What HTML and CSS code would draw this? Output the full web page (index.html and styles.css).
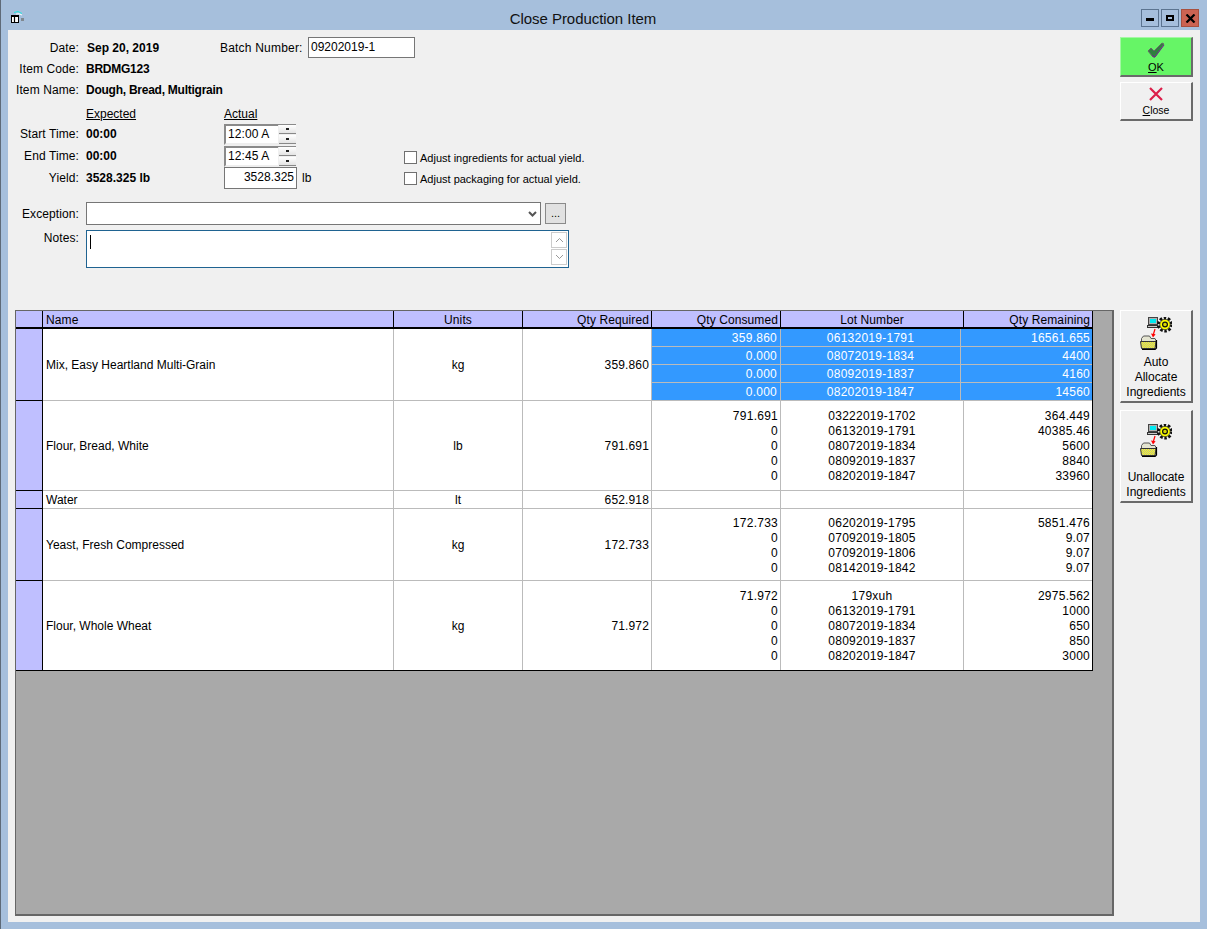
FILE: index.html
```html
<!DOCTYPE html>
<html lang="en">
<head>
<meta charset="utf-8">
<title>Close Production Item</title>
<link rel="stylesheet" href="styles.css">
</head>
<body>
<svg class="defs" width="0" height="0" aria-hidden="true">
  <defs>
    <pattern id="dither" width="2" height="2" patternUnits="userSpaceOnUse">
      <rect width="2" height="2" fill="#ffff20"/>
      <rect width="1" height="1" fill="#b8b890"/>
      <rect x="1" y="1" width="1" height="1" fill="#b8b890"/>
    </pattern>
    <symbol id="alloc" viewBox="0 0 32 33">
      <rect x="8.500" y="0.500" width="9" height="7" fill="#b0b0b0" stroke="#444"/>
      <rect x="10" y="2" width="6" height="4" fill="#00e8f0"/>
      <rect x="7.500" y="8.500" width="10" height="2" fill="#c8c8c8" stroke="#333"/>
      <circle cx="25" cy="7.500" r="6.300" fill="none" stroke="#111" stroke-width="3.400" stroke-dasharray="2.400 1.557"/>
      <circle cx="25" cy="7.500" r="5.200" fill="#ffff00" stroke="#222" stroke-width="0.700"/>
      <circle cx="25" cy="7.500" r="2.400" fill="#d8d800" stroke="#111" stroke-width="1.200"/>
      <path d="M15 12l-1.500 5" stroke="#f00" stroke-width="1.200" fill="none"/>
      <path d="M11 16.500l2 4 2.600-3.200z" fill="#f00"/>
      <path d="M1.500 21.500l2-2.500h6l1.500 2.500h4l1 2v6h-14.500z" fill="#e4e4d0" stroke="#555"/>
      <path d="M0.500 24.500h15.500l-1 7h-13.500z" fill="url(#dither)" stroke="#333"/>
      <path d="M16.500 23v8l-1.500 1.500h-13" fill="none" stroke="#000" stroke-width="1.200"/>
    </symbol>
  </defs>
</svg>
<div class="window">
  <header class="titlebar">
    <svg class="app-icon" width="16" height="14" viewBox="0 0 16 14" aria-hidden="true">
      <path d="M4 2.500q4-2.500 8 1" fill="none" stroke="#20e8e0"/>
      <path d="M6 4q3-1 6 1" fill="none" stroke="#fff"/>
      <rect x="1.500" y="5.500" width="7" height="7" fill="#fff" stroke="#000"/>
      <path d="M1 6.500h8M4.500 7v5" stroke="#000" stroke-width="1.200"/>
      <rect x="11" y="8" width="3" height="3" fill="#808890"/>
    </svg>
    <h1 class="title">Close Production Item</h1>
    <div class="win-buttons">
      <span class="win-btn"><i class="glyph-min"></i></span>
      <span class="win-btn"><i class="glyph-max"></i></span>
      <span class="win-btn win-close">
        <svg width="11" height="9" viewBox="0 0 11 9" aria-hidden="true"><path d="M1.500 0.500l8 8M9.500 0.500l-8 8" stroke="#000" stroke-width="2.200"/></svg>
      </span>
    </div>
  </header>

  <div class="client">
    <section class="top">
      <form class="form">
        <div class="row row-date">
          <span class="label">Date:</span>
          <strong class="value value-date">Sep 20, 2019</strong>
          <span class="batch-label">Batch Number:</span>
          <span class="input batch-input">09202019-1</span>
        </div>
        <div class="row"><span class="label">Item Code:</span><strong class="value tight">BRDMG123</strong></div>
        <div class="row"><span class="label">Item Name:</span><strong class="value tight">Dough, Bread, Multigrain</strong></div>

        <div class="times">
          <div class="times-main">
            <div class="row row-head">
              <span class="label"></span>
              <span class="col-expected head">Expected</span>
              <span class="head">Actual</span>
            </div>
            <div class="row row-time">
              <span class="label">Start Time:</span><strong class="value">00:00</strong>
              <span class="time-field"><span class="time-text">12:00 A</span><span class="spin"><i class="up"></i><i class="down"></i></span></span>
            </div>
            <div class="row row-time">
              <span class="label">End Time:</span><strong class="value">00:00</strong>
              <span class="time-field"><span class="time-text">12:45 A</span><span class="spin"><i class="up"></i><i class="down"></i></span></span>
            </div>
            <div class="row row-time">
              <span class="label">Yield:</span><strong class="value">3528.325 lb</strong>
              <span class="input yield-input">3528.325</span><span class="unit">lb</span>
            </div>
          </div>
          <div class="checks">
            <label class="check"><i class="box"></i>Adjust ingredients for actual yield.</label>
            <label class="check"><i class="box"></i>Adjust packaging for actual yield.</label>
          </div>
        </div>

        <div class="row row-exception">
          <span class="label">Exception:</span>
          <span class="select"><svg width="9" height="6" viewBox="0 0 9 6" aria-hidden="true"><path d="M1 1l3.500 3.500L8 1" fill="none" stroke="#555" stroke-width="2"/></svg></span>
          <span class="dots">...</span>
        </div>
        <div class="row row-notes">
          <span class="label">Notes:</span>
          <span class="notes">
            <i class="caret"></i>
            <span class="scroll">
              <i class="scroll-btn"><svg width="9" height="6" viewBox="0 0 9 6" aria-hidden="true"><path d="M1 5l3.500-3.500L8 5" fill="none" stroke="#999"/></svg></i>
              <i class="scroll-btn"><svg width="9" height="6" viewBox="0 0 9 6" aria-hidden="true"><path d="M1 1l3.500 3.500L8 1" fill="none" stroke="#999"/></svg></i>
            </span>
          </span>
        </div>
      </form>
      <div class="actions">
        <button class="btn btn-ok" type="button">
          <svg width="18" height="16" viewBox="0 0 18 16" aria-hidden="true">
            <path d="M1 9l3-3 3 3 8-8 2 1-9 13H6z" fill="#2f7f3f" stroke="#666" stroke-width="1"/>
            <path d="M5 13l2 2h1l9-12" fill="none" stroke="#6a2a8a" stroke-width="1"/>
          </svg>
          <span><u>O</u>K</span>
        </button>
        <button class="btn btn-close" type="button">
          <svg width="14" height="14" viewBox="0 0 14 14" aria-hidden="true">
            <path d="M1 1l12 12M13 1l-12 12" stroke="#dc1f4a" stroke-width="2.200"/>
          </svg>
          <span><u>C</u>lose</span>
        </button>
      </div>
    </section>

    <section class="bottom">
      <div class="grid-area">
        <div class="grid">
          <div class="g-row g-head">
            <div class="h-stub"></div>
            <div class="h-cell left">Name</div>
            <div class="h-cell center">Units</div>
            <div class="h-cell right">Qty Required</div>
            <div class="h-cell right">Qty Consumed</div>
            <div class="h-cell center">Lot Number</div>
            <div class="h-cell right end">Qty Remaining</div>
          </div>

          <div class="g-row r1">
            <div class="stub"></div>
            <div class="cell left">Mix, Easy Heartland Multi-Grain</div>
            <div class="cell center">kg</div>
            <div class="cell right num">359.860</div>
            <div class="selected">
              <div class="s-row"><span>359.860</span><span>06132019-1791</span><span>16561.655</span></div>
              <div class="s-row"><span>0.000</span><span>08072019-1834</span><span>4400</span></div>
              <div class="s-row"><span>0.000</span><span>08092019-1837</span><span>4160</span></div>
              <div class="s-row"><span>0.000</span><span>08202019-1847</span><span>14560</span></div>
            </div>
          </div>

          <div class="g-row r2">
            <div class="stub"></div>
            <div class="cell left">Flour, Bread, White</div>
            <div class="cell center">lb</div>
            <div class="cell right num">791.691</div>
            <div class="cell right stack">791.691<br>0<br>0<br>0<br>0</div>
            <div class="cell center stack">03222019-1702<br>06132019-1791<br>08072019-1834<br>08092019-1837<br>08202019-1847</div>
            <div class="cell right stack end">364.449<br>40385.46<br>5600<br>8840<br>33960</div>
          </div>

          <div class="g-row r3">
            <div class="stub"></div>
            <div class="cell left">Water</div>
            <div class="cell center">lt</div>
            <div class="cell right num">652.918</div>
            <div class="cell"></div>
            <div class="cell"></div>
            <div class="cell end"></div>
          </div>

          <div class="g-row r4">
            <div class="stub"></div>
            <div class="cell left">Yeast, Fresh Compressed</div>
            <div class="cell center">kg</div>
            <div class="cell right num">172.733</div>
            <div class="cell right stack">172.733<br>0<br>0<br>0</div>
            <div class="cell center stack">06202019-1795<br>07092019-1805<br>07092019-1806<br>08142019-1842</div>
            <div class="cell right stack end">5851.476<br>9.07<br>9.07<br>9.07</div>
          </div>

          <div class="g-row r5">
            <div class="stub"></div>
            <div class="cell left">Flour, Whole Wheat</div>
            <div class="cell center">kg</div>
            <div class="cell right num">71.972</div>
            <div class="cell right stack">71.972<br>0<br>0<br>0<br>0</div>
            <div class="cell center stack">179xuh<br>06132019-1791<br>08072019-1834<br>08092019-1837<br>08202019-1847</div>
            <div class="cell right stack end">2975.562<br>1000<br>650<br>850<br>3000</div>
          </div>
        </div>
      </div>
      <div class="side">
        <button class="btn btn-tall" type="button">
          <svg class="alloc" width="32" height="33" aria-hidden="true"><use href="#alloc"/></svg>
          <span class="btn-label">Auto<br>Allocate<br>Ingredients</span>
        </button>
        <button class="btn btn-tall btn-un" type="button">
          <svg class="alloc" width="32" height="33" aria-hidden="true"><use href="#alloc"/></svg>
          <span class="btn-label">Unallocate<br>Ingredients</span>
        </button>
      </div>
    </section>
  </div>
</div>
</body>
</html>
```
FILE: styles.css
```css
* { box-sizing: border-box; }
html, body { margin: 0; padding: 0; }
body {
  width: 1207px;
  height: 929px;
  overflow: hidden;
  font-family: "Liberation Sans", Arial, sans-serif;
  font-size: 12px;
  color: #000;
}
.defs { display: block; height: 0; }
i { display: block; font-style: normal; }

.window {
  width: 1207px;
  height: 929px;
  display: flex;
  flex-direction: column;
  background: #a6bfdc;
  border-left: 1px solid #5e6a78;
}
.titlebar {
  height: 30px;
  flex: none;
  display: flex;
  align-items: center;
  padding: 0 8px 0 9px;
  position: relative;
}
.app-icon { margin-top: 4px; }
.title {
  position: absolute;
  left: 0;
  right: 42px;
  top: 9px;
  margin: 0;
  text-align: center;
  font: 400 15px/20px "Liberation Sans", Arial, sans-serif;
  letter-spacing: -0.05px;
  color: #111;
}
.win-buttons {
  margin-left: auto;
  margin-top: 6px;
  display: flex;
  gap: 2px;
  position: relative;
}
.win-btn {
  width: 18px;
  height: 18px;
  border: 1px solid #5c7490;
  display: flex;
  align-items: center;
  justify-content: center;
}
.win-close { background: #cc6352; border-color: #a8503f; }
.glyph-min { width: 8px; height: 3px; background: #000; margin-top: 3px; }
.glyph-max { width: 8px; height: 6px; border: 2px solid #000; border-width: 2px; }

.client {
  flex: 1;
  margin: 0 7px 7px 7px;
  background: #f0f0f0;
  display: flex;
  flex-direction: column;
  min-height: 0;
}

/* top form */
.top { height: 280px; flex: none; display: flex; }
.form { flex: 1; padding-top: 7px; }
.row { display: flex; align-items: center; height: 21px; }
.label { width: 71px; flex: none; text-align: right; margin-right: 7px; letter-spacing: 0.1px; white-space: nowrap; }
.value { width: 138px; flex: none; font-weight: 700; white-space: nowrap; }
.tight { letter-spacing: -0.25px; }
.col-expected { width: 138px; flex: none; }
.value-date { width: 133px; margin-left: 1px; }
.batch-label { width: 82px; flex: none; letter-spacing: 0.2px; white-space: nowrap; }
.input {
  background: #fff;
  border: 1px solid #767676;
  display: block;
}
.batch-input { width: 107px; height: 21px; line-height: 18px; padding-left: 2px; margin-left: 6px; }
.times { display: flex; }
.times-main { width: 396px; flex: none; }
.row-head { height: 17px; margin: 5px 0 1px; }
.head { text-decoration: underline; }
.row-time { height: 22px; }
.time-field {
  width: 72px;
  height: 21px;
  display: flex;
  align-items: center;
  background: #fff;
  border: 2px solid #8a8a8a;
  border-right: 0;
  border-bottom-color: #eee;
}
.time-text { flex: 1; padding-left: 2px; letter-spacing: 0.1px; }
.spin { width: 18px; height: 19px; display: flex; flex-direction: column; justify-content: space-between; background: #f0f0f0; padding-left: 1px; }
.spin i { height: 9px; background: linear-gradient(#fff, #e4e4e4); border-bottom: 1px solid #888; position: relative; }
.spin i::after { content: ""; position: absolute; left: 7px; top: 3px; width: 3px; height: 2px; background: #222; }
.yield-input { width: 73px; height: 22px; line-height: 19px; padding-right: 2px; text-align: right; }
.unit { margin-left: 5px; }
.checks { padding-top: 51px; display: flex; flex-direction: column; gap: 8px; }
.check { display: flex; align-items: center; height: 13px; font-size: 11px; gap: 3px; }
.box { width: 13px; height: 13px; background: #fff; border: 1px solid #707070; }

.row-exception { height: 23px; margin-top: 13px; }
.select {
  width: 455px;
  height: 23px;
  background: #fff;
  border: 1px solid #767676;
  display: flex;
  align-items: center;
  justify-content: flex-end;
  padding-right: 3px;
}
.dots {
  width: 21px;
  height: 21px;
  margin-left: 4px;
  background: #e1e1e1;
  border: 1px solid #8a8a8a;
  text-align: center;
  line-height: 19px;
  font-size: 11px;
}
.row-notes { height: 38px; margin-top: 5px; align-items: flex-start; }
.row-notes .label { line-height: 17px; }
.notes {
  width: 483px;
  height: 38px;
  background: #fff;
  border: 1px solid #1f6391;
  display: flex;
  justify-content: space-between;
  padding: 1px;
}
.caret { width: 1px; height: 14px; background: #000; margin: 3px 0 0 2px; }
.scroll { display: flex; flex-direction: column; gap: 1px; width: 16px; }
.scroll-btn {
  height: 16px;
  border: 1px solid #ccc;
  display: flex;
  align-items: center;
  justify-content: center;
}

.actions { width: 80px; flex: none; padding-top: 7px; display: flex; flex-direction: column; gap: 5px; }
.btn {
  width: 73px;
  padding: 0;
  background: #f0f0f0;
  border: 1px solid;
  border-color: #fff #6a6a6a #6a6a6a #fff;
  border-width: 1px 2px 2px 1px;
  display: flex;
  flex-direction: column;
  align-items: center;
  font: 12px/15px "Liberation Sans", Arial, sans-serif;
  color: #000;
}
.btn-ok { height: 40px; background: #66f566; border-top-color: #a4f7a4; border-left-color: #a4f7a4; padding-top: 4px; font-size: 11px; }
.btn-close { height: 39px; padding-top: 4px; font-size: 10.5px; }
.btn-close span { margin-top: 2px; }
.btn-ok span { margin-top: 2px; }

/* grid */
.bottom { flex: 1; display: flex; min-height: 0; padding: 0 7px 6px 7px; }
.grid-area {
  width: 1099px;
  height: 606px;
  flex: none;
  background: #a9a9a9;
  border: 1px solid #666;
  border-width: 1px 2px 2px 1px;
}
.grid { width: 1077px; border-bottom: 1px solid #000; border-right: 1px solid #000; }
.g-row {
  display: grid;
  grid-template-columns: 27px 351px 129px 129px 129px 183px 128px;
  background: #fff;
}
.g-head { height: 18px; background: #bfbfff; border-bottom: 2px solid #000; }
.h-stub { border-right: 1px solid #000; }
.h-cell { border-right: 1px solid #000; padding: 0 2px; line-height: 18px; letter-spacing: 0.1px; }
.h-cell.end { border-right: 0; }
.left { text-align: left; padding-left: 3px; }
.center { text-align: center; }
.right { text-align: right; }
.stub { background: #bfbfff; border-right: 1px solid #000; border-bottom: 1px solid #000; }
.cell {
  border-right: 1px solid #bbb;
  border-bottom: 1px solid #bbb;
  padding: 2px 2px 0;
  display: flex;
  align-items: center;
  line-height: 15px;
}
.cell.left { justify-content: flex-start; padding-left: 3px; }
.cell.center { justify-content: center; }
.cell.right { justify-content: flex-end; }
.cell.stack { display: block; align-self: stretch; letter-spacing: 0.25px; }
.cell.num { letter-spacing: 0.15px; }
.cell.end { border-right: 0; }
.r1 { height: 72px; }
.r2 { height: 90px; }
.r2 .stack, .r5 .stack { padding-top: 8px; }
.r3 { height: 18px; }
.r4 { height: 72px; }
.r4 .stack { padding-top: 7px; }
.r5 { height: 89px; }
.r5 .stub, .r5 .cell { border-bottom: 0; }
.selected { grid-column: 5 / 8; display: flex; flex-direction: column; }
.s-row {
  height: 18px;
  display: grid;
  grid-template-columns: 129px 180px 1fr;
  background: #3399ff;
  color: #fff;
  border-bottom: 1px solid #bbb;
}
.s-row span { padding: 0 2px; line-height: 19px; border-right: 1px solid #bbb; text-align: center; letter-spacing: 0.25px; overflow: hidden; }
.s-row span:first-child, .s-row span:last-child { text-align: right; }
.s-row span:first-child { padding-right: 3px; }
.s-row span:last-child { border-right: 0; }

.side { width: 80px; flex: none; margin-left: 6px; display: flex; flex-direction: column; gap: 7px; }
.btn-tall { height: 93px; padding-top: 6px; }
.btn-un { padding-top: 13px; }
.alloc { flex: none; }
.btn-label { margin-top: 5px; }
.btn-un .btn-label { margin-top: 13px; }
```
